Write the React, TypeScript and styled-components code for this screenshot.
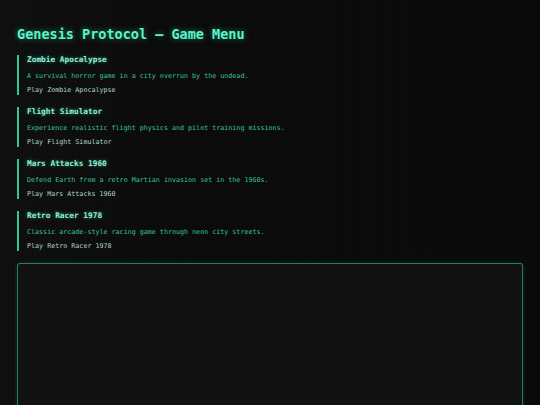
import React from "react";
import styled, { createGlobalStyle } from "styled-components";

const GlobalStyle = createGlobalStyle`
  html, body {
    margin: 0;
    padding: 0;
    background: #0b0b0b;
  }
  body {
    font-family: "DejaVu Sans Mono", "Liberation Mono", monospace;
  }
`;

const Page = styled.div`
  box-sizing: border-box;
  padding: 26px 17px 0;
  overflow: hidden;
  height: 405px;
  background-color: #0b0b0b;
  background-image: repeating-linear-gradient(
      90deg,
      rgba(255, 255, 255, 0.006) 0px,
      rgba(255, 255, 255, 0.006) 1px,
      transparent 1px,
      transparent 5px
    ),
    linear-gradient(90deg, #0f0f0f 0%, #0b0b0b 30%, #0a0a0a 100%);
`;

const Title = styled.h1`
  margin: 0 0 13px;
  font-size: 13.5px;
  line-height: 16px;
  font-weight: bold;
  color: #5ef2c9;
  text-shadow: 0 0 6px rgba(46, 230, 170, 0.55);
`;

const GameList = styled.div`
  display: flex;
  flex-direction: column;
  gap: 12px;
`;

const GameItem = styled.div`
  border-left: 2px solid #2ec795;
  padding-left: 8px;
  display: flex;
  flex-direction: column;
`;

const GameTitle = styled.h2`
  margin: 0 0 6.5px;
  font-size: 7.8px;
  line-height: 10px;
  font-weight: bold;
  color: #8ff3d8;
  text-shadow: 0 0 4px rgba(46, 230, 170, 0.5);
`;

const GameDesc = styled.p`
  margin: 0 0 5.5px;
  font-size: 6.7px;
  line-height: 9px;
  color: #38c497;
`;

const PlayLink = styled.a`
  font-size: 6.7px;
  line-height: 9px;
  color: #aed8c6;
  text-decoration: none;
  cursor: pointer;
`;

const Screen = styled.div`
  margin-top: 12px;
  height: 200px;
  background: #121212;
  border: 1px solid rgba(46, 200, 150, 0.6);
  border-radius: 3px;
  box-shadow: 0 0 4px rgba(46, 230, 170, 0.15);
`;

const games = [
  {
    name: "Zombie Apocalypse",
    desc: "A survival horror game in a city overrun by the undead.",
  },
  {
    name: "Flight Simulator",
    desc: "Experience realistic flight physics and pilot training missions.",
  },
  {
    name: "Mars Attacks 1960",
    desc: "Defend Earth from a retro Martian invasion set in the 1960s.",
  },
  {
    name: "Retro Racer 1978",
    desc: "Classic arcade-style racing game through neon city streets.",
  },
];

export default function App() {
  return (
    <>
      <GlobalStyle />
      <Page>
        <Title>Genesis Protocol — Game Menu</Title>
        <GameList>
          {games.map((g) => (
            <GameItem key={g.name}>
              <GameTitle>{g.name}</GameTitle>
              <GameDesc>{g.desc}</GameDesc>
              <PlayLink>Play {g.name}</PlayLink>
            </GameItem>
          ))}
        </GameList>
        <Screen />
      </Page>
    </>
  );
}
